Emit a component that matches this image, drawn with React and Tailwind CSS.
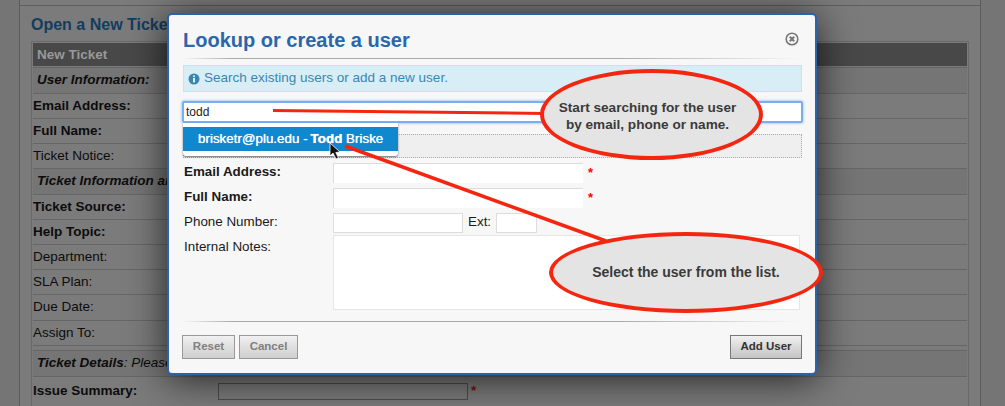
import React from "react";

const font = "font-['Liberation_Sans',Arial,sans-serif]";

const rows = [
  { label: "User Information:", kind: "section", h: "h-[26px]" },
  { label: "Email Address:", kind: "bold", h: "h-[25px]" },
  { label: "Full Name:", kind: "bold", h: "h-[25px]" },
  { label: "Ticket Notice:", kind: "plain", h: "h-[25px]" },
  { label: "Ticket Information and", kind: "section", h: "h-[26px]" },
  { label: "Ticket Source:", kind: "bold", h: "h-[25px]" },
  { label: "Help Topic:", kind: "bold", h: "h-[25px]" },
  { label: "Department:", kind: "plain", h: "h-[25px]" },
  { label: "SLA Plan:", kind: "plain", h: "h-[25px]" },
  { label: "Due Date:", kind: "plain", h: "h-[26px]" },
  { label: "Assign To:", kind: "plain", h: "h-[25px]" },
];

function PageRow({ label, kind, h }) {
  const text =
    kind === "section"
      ? "font-bold italic pl-[4px] bg-[#757575]"
      : kind === "bold"
        ? "font-bold"
        : "";
  return (
    <div className={`${h} ${text} flex items-center border-b border-[#666] text-[13.5px] text-[#0c0c0c] whitespace-nowrap`}>
      {label}
    </div>
  );
}

function Background() {
  return (
    <div className="flex h-[406px] bg-[#7b7b7b]">
      <div className="w-[20px] shrink-0 bg-[#757575] border-r border-[#5c5c5c]" />
      <div className="flex-1 flex flex-col">
        <div className="h-[6px] border-b border-[#5e5e5e] shrink-0" />
        <div className="pl-[11px] pt-[10px] h-[35px] shrink-0 text-[16px] leading-[18px] font-bold text-[#123d5f]">
          Open a New Ticket
        </div>
        <div className="ml-[11px] mr-[11px] border-l border-r border-[#6a6a6a] border-t pt-[1px] pl-[1px] pr-[1px]">
          <div className="h-[23px] bg-[#484848] flex items-center pl-[4px] pt-[2px] text-[13.5px] font-bold text-[#999] mb-[1px]">
            New Ticket
          </div>
          <div className="border-t border-[#666]">
            {rows.map((r) => (
              <PageRow key={r.label} {...r} />
            ))}
          </div>
          <div className="h-[4px]" />
          <div className="h-[27px] border-t border-b border-[#666] bg-[#757575] flex items-center pl-[4px] text-[13.5px] italic text-[#0c0c0c] whitespace-nowrap">
            <b>Ticket Details</b>: Please Describe Your Issue
          </div>
          <div className="flex items-center h-[29px] text-[13.5px] font-bold text-[#0c0c0c]">
            <span className="w-[185px] shrink-0">Issue Summary:</span>
            <span className="w-[250px] h-[17px] border border-[#4d4d4d]" />
            <span className="ml-[3px] text-[#7a1010]">*</span>
          </div>
        </div>
      </div>
      <div className="w-[25px] shrink-0 bg-[#757575] border-l border-[#5c5c5c]" />
    </div>
  );
}

function Field({ label, bold, width, req, top = "" }) {
  return (
    <div className={`flex items-center h-[25px] ${top}`}>
      <span className={`w-[150px] shrink-0 pl-[1px] pb-[1px] text-[13.4px] text-[#1a1a1a] ${bold ? "font-bold" : ""}`}>{label}</span>
      <span className={`${width} h-[20px] bg-white border-t border-l border-[#dcdcdc]`} />
      {req && <span className="ml-[5px] text-[13px] font-bold text-[#f00]">*</span>}
    </div>
  );
}

function Modal() {
  return (
    <div className="absolute left-[167px] top-[13px] w-[650px] h-[362px] rounded-[5px] border-[2px] border-[#2a63ab] bg-[#f7f7f7] shadow-[0_4px_38px_rgba(0,0,0,0.72)] px-[14px] flex flex-col">
      <div className="h-[43px] shrink-0 flex items-end justify-between pb-[5px]">
        <h1 className="text-[20px] leading-[26px] font-bold text-[#2a66ab]">Lookup or create a user</h1>
        <svg width="14" height="14" viewBox="0 0 14 14" className="mb-[7px] mr-[2px]">
          <circle cx="7" cy="7" r="5.8" fill="none" stroke="#777" strokeWidth="1.6" />
          <path d="M4.8 4.8 9.2 9.2M9.2 4.8 4.8 9.2" stroke="#777" strokeWidth="2" />
        </svg>
      </div>
      <div className="h-px shrink-0 bg-[linear-gradient(to_right,transparent,#aaa_8%,#aaa_70%,transparent)]" />
      <div className="mt-[6px] h-[27px] shrink-0 w-[619px] bg-[#d9edf7] border border-[#bce8f1] flex items-center pl-[4px] gap-[4px] text-[13.5px] text-[#3a87ad]">
        <svg width="12" height="12" viewBox="0 0 12 12">
          <circle cx="6" cy="6" r="5.5" fill="#3a87ad" />
          <rect x="5" y="5" width="2" height="4.4" fill="#d9edf7" />
          <rect x="5" y="2.4" width="2" height="1.7" fill="#d9edf7" />
        </svg>
        <span>Search existing users or add a new user.</span>
      </div>
      <div className="mt-[9px] h-[22px] shrink-0 w-[621px] -ml-[1px] bg-white border-2 border-[#79aef0] rounded-[2px] shadow-[0_0_3px_#79aef0] flex items-center pl-[2px] text-[12px] text-[#222]">
        todd
      </div>
      <div className="mt-[11px] h-[24px] shrink-0 w-[619px] bg-[#efefef] border border-dotted border-[#aaa]" />
      <Field label="Email Address:" bold width="w-[250px]" req top="mt-[2px]" />
      <Field label="Full Name:" bold width="w-[250px]" req />
      <div className="flex items-center h-[25px]">
        <span className="w-[150px] shrink-0 pl-[1px] pb-[1px] text-[13.4px] text-[#1a1a1a]">Phone Number:</span>
        <span className="w-[130px] h-[20px] bg-white border border-[#dcdcdc]" />
        <span className="ml-[5px] mr-[5px] text-[13.4px] text-[#1a1a1a]">Ext:</span>
        <span className="w-[41px] h-[20px] bg-white border border-[#dcdcdc]" />
      </div>
      <div className="flex">
        <span className="w-[150px] shrink-0 pl-[1px] pt-[2px] text-[13.4px] text-[#1a1a1a]">Internal Notes:</span>
        <span className="w-[467px] h-[75px] bg-white border border-[#e6e6e6]" />
      </div>
      <div className="mt-[11px] h-px shrink-0 bg-[linear-gradient(to_right,transparent,#aaa_8%,#aaa_70%,transparent)]" />
      <div className="mt-[13px] flex justify-between w-[620px] -ml-[1px]">
        <div className="flex gap-[4px]">
          <button className="h-[24px] w-[53px] border border-[#999] bg-linear-to-b from-[#f0f0f0] to-[#cfcfcf] text-[11.5px] font-bold text-[#808080]">Reset</button>
          <button className="h-[24px] w-[59px] border border-[#999] bg-linear-to-b from-[#f0f0f0] to-[#cfcfcf] text-[11.5px] font-bold text-[#808080]">Cancel</button>
        </div>
        <button className="h-[24px] w-[72px] border border-[#777] bg-linear-to-b from-[#f0f0f0] to-[#c4c4c4] text-[11.5px] font-bold text-[#333]">Add User</button>
      </div>
    </div>
  );
}

function Suggestions() {
  return (
    <div className="absolute left-[183px] top-[123px] w-[215px] h-[33px] bg-white rounded-b-[3px] shadow-[0_1px_2px_rgba(0,0,0,0.55)] pt-[4px]">
      <div className="h-[24px] bg-[#0f88d0] flex items-center pl-[15px] text-[13.4px] text-white [text-shadow:0_0_0.7px_#fff] whitespace-nowrap">
        brisketr@plu.edu - <b className="ml-[3px]">Todd</b>&nbsp;Briske
      </div>
    </div>
  );
}

function Callout({ className, children }) {
  return (
    <div className={`absolute rounded-[50%] border-[4px] border-[#f5260f] bg-[#e4e4e4] flex items-center justify-center text-center leading-[17px] font-bold text-[#3a3a3a] ${className}`}>
      <span>{children}</span>
    </div>
  );
}

export default function App() {
  return (
    <div className={`relative w-[1005px] h-[406px] overflow-hidden ${font}`}>
      <Background />
      <Modal />
      <Suggestions />
      <svg className="absolute left-0 top-0" width="1005" height="406">
        <path d="M273 109 L545 112 L545 115 L273 112 Z" fill="#f5260f" />
        <line x1="345" y1="146" x2="606" y2="241" stroke="#f5260f" strokeWidth="3.5" />
        <path d="M330 143 V156 L333 153 L336 159 L338.5 158 L335.8 152.5 L340 152 Z" fill="#111" stroke="#fff" strokeWidth="0.8" />
      </svg>
      <Callout className="left-[540px] top-[69px] w-[223px] h-[91px] pr-[8px] pt-[2px] text-[13.6px]">
        Start searching for the user<br />by email, phone or name.
      </Callout>
      <Callout className="left-[549px] top-[232px] w-[274px] h-[81px] text-[14px]">
        Select the user from the list.
      </Callout>
    </div>
  );
}
